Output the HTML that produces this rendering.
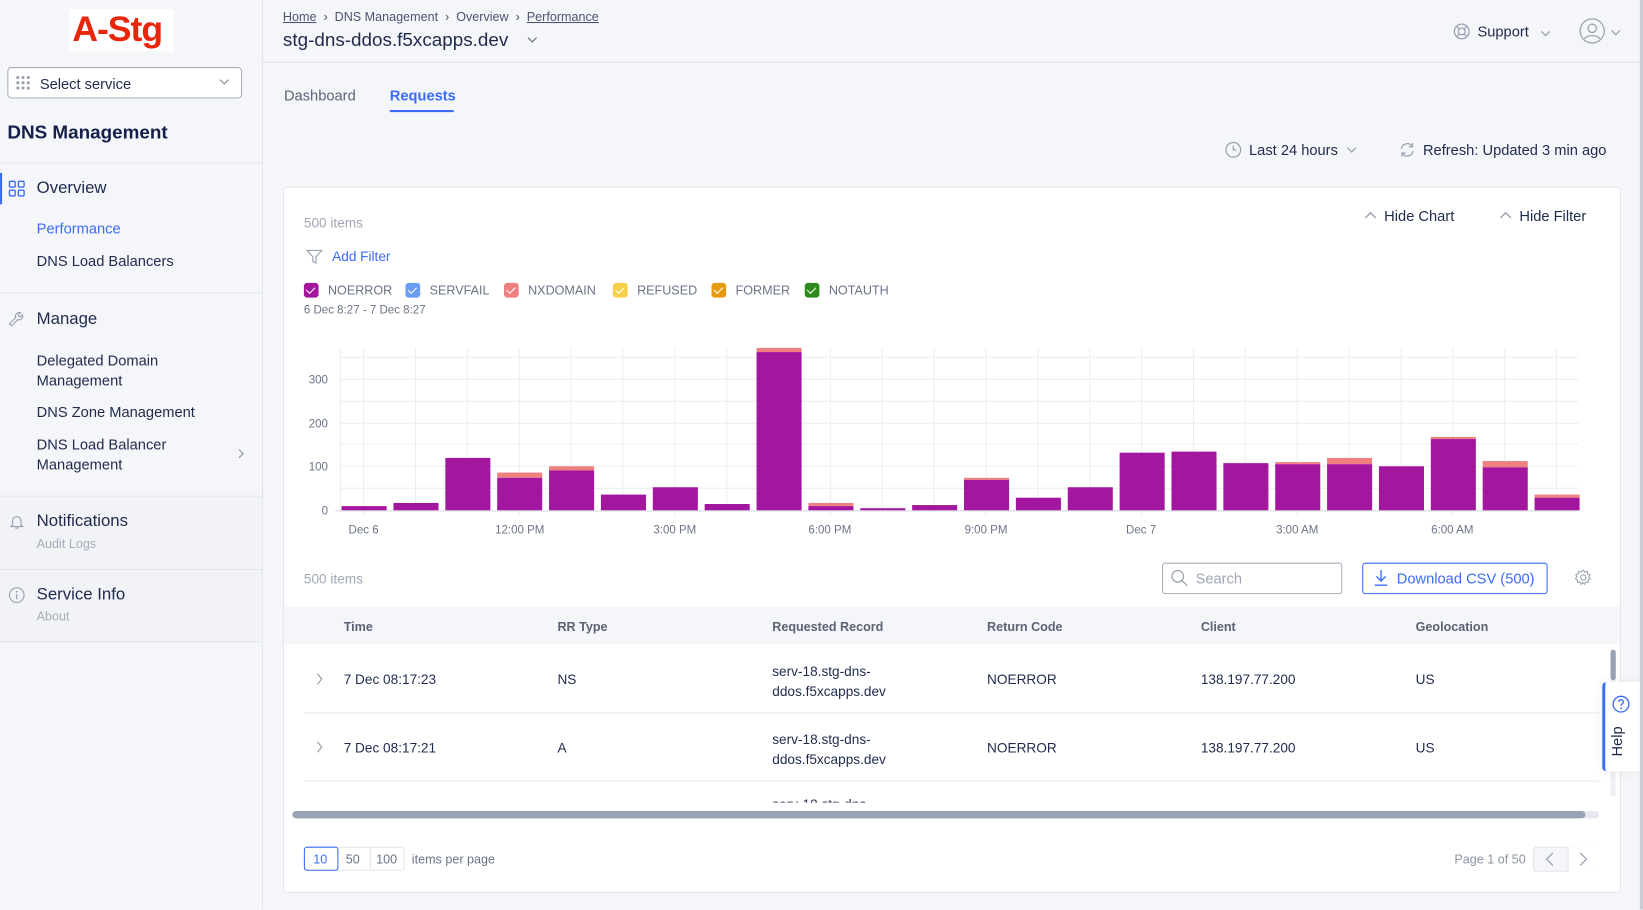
<!DOCTYPE html>
<html><head><meta charset="utf-8">
<style>
*{box-sizing:border-box;margin:0;padding:0}
html,body{width:1643px;height:910px;overflow:hidden;background:#f5f6f9;font-family:"Liberation Sans",sans-serif;color:#1f2a4d}
#w{position:absolute;left:0;top:0;width:1568px;height:868px;transform:scale(1.04783);transform-origin:0 0;background:#f5f6f9}
.a{position:absolute;white-space:nowrap}
.sb{position:absolute;left:0;top:0;width:251px;height:868px;background:#f5f6f9;border-right:1px solid #e2e5ec}
.hr{position:absolute;left:0;width:250px;height:1px;background:#e2e5ec}
.g{color:#8d93a3}
.b{color:#3b6cf6}
.t14{font-size:14px}
.t12{font-size:12px}
.cb{position:absolute;width:14px;height:14px;border-radius:3px;top:270px}
.cb:after{content:"";position:absolute;left:4px;top:2px;width:4px;height:7px;border:solid #fff;border-width:0 1.5px 1.5px 0;transform:rotate(45deg)}
.th{font-size:12px;font-weight:bold;color:#5b6275}
</style></head><body><div id="w">
<div class="sb">
 <div class="a" style="left:66px;top:9px;width:100px;height:40px;background:#fff"></div>
 <div class="a" style="left:69px;top:9px;font-size:34px;font-weight:bold;color:#e8260c;letter-spacing:-1px">A-Stg</div>
 <div class="a" style="left:7px;top:64px;width:224px;height:30px;border:1px solid #a7adbb;border-radius:4px;background:#fff"></div>
 <svg class="a" style="left:15px;top:72px" width="16" height="14"><g fill="#9aa1b1"><circle cx="2" cy="2" r="1.5"/><circle cx="7" cy="2" r="1.5"/><circle cx="12" cy="2" r="1.5"/><circle cx="2" cy="7" r="1.5"/><circle cx="7" cy="7" r="1.5"/><circle cx="12" cy="7" r="1.5"/><circle cx="2" cy="12" r="1.5"/><circle cx="7" cy="12" r="1.5"/><circle cx="12" cy="12" r="1.5"/></g></svg>
 <div class="a t14" style="left:38px;top:72px">Select service</div>
 <svg class="a" style="left:209px;top:75px" width="10" height="6"><path d="M1 1l4 4 4-4" fill="none" stroke="#8d93a3" stroke-width="1.2"/></svg>
 <div class="a" style="left:7px;top:116px;font-size:18px;font-weight:bold;color:#15204a">DNS Management</div>
 <div class="hr" style="top:155px"></div>
 <div class="a" style="left:0;top:165px;width:2px;height:30px;background:#3b6cf6"></div>
 <svg class="a" style="left:8px;top:172px" width="16" height="16"><g fill="none" stroke="#3b6cf6" stroke-width="1.3"><rect x="1" y="1" width="5.5" height="5.5" rx="1.2"/><rect x="9.5" y="1" width="5.5" height="5.5" rx="1.2"/><rect x="1" y="9.5" width="5.5" height="5.5" rx="1.2"/><rect x="9.5" y="9.5" width="5.5" height="5.5" rx="1.2"/></g></svg>
 <div class="a" style="left:35px;top:171px;font-size:16px">Overview</div>
 <div class="a t14 b" style="left:35px;top:210px">Performance</div>
 <div class="a t14" style="left:35px;top:241px">DNS Load Balancers</div>
 <div class="hr" style="top:279px"></div>
 <svg class="a" style="left:8px;top:297px" width="16" height="16"><path d="M3 14l6-6a3.5 3.5 0 0 0 4.5-4.5l-2 2-1.5-.5-.5-1.5 2-2A3.5 3.5 0 0 0 7 6L1 12z" fill="none" stroke="#9aa1b1" stroke-width="1.1"/></svg>
 <div class="a" style="left:35px;top:296px;font-size:16px">Manage</div>
 <div class="a t14" style="left:35px;top:335px;line-height:19px">Delegated Domain<br>Management</div>
 <div class="a t14" style="left:35px;top:385px">DNS Zone Management</div>
 <div class="a t14" style="left:35px;top:415px;line-height:19px">DNS Load Balancer<br>Management</div>
 <svg class="a" style="left:227px;top:428px" width="6" height="10"><path d="M1 1l4 4-4 4" fill="none" stroke="#8d93a3" stroke-width="1.1"/></svg>
 <div class="a" style="left:0;top:473px;width:250px;height:140px;background:#f1f3f7"></div>
 <div class="hr" style="top:473px"></div>
 <svg class="a" style="left:8px;top:490px" width="16" height="16"><path d="M4 11V7a4 4 0 0 1 8 0v4l1.5 1.5h-11zM6.5 14h3" fill="none" stroke="#9aa1b1" stroke-width="1.1"/></svg>
 <div class="a" style="left:35px;top:489px;font-size:16px">Notifications</div>
 <div class="a t12 g" style="left:35px;top:512px;color:#a5abb9">Audit Logs</div>
 <div class="hr" style="top:543px"></div>
 <svg class="a" style="left:8px;top:560px" width="16" height="16"><circle cx="8" cy="8" r="7" fill="none" stroke="#9aa1b1" stroke-width="1.1"/><path d="M8 7v5" stroke="#9aa1b1" stroke-width="1.2"/><circle cx="8" cy="4.7" r=".9" fill="#9aa1b1"/></svg>
 <div class="a" style="left:35px;top:559px;font-size:16px">Service Info</div>
 <div class="a t12" style="left:35px;top:581px;color:#a5abb9">About</div>
 <div class="hr" style="top:612px"></div>
</div>

<!-- header -->
<div class="a t12" style="left:270px;top:9px;color:#4b5470"><span style="text-decoration:underline">Home</span> &nbsp;›&nbsp; DNS Management &nbsp;›&nbsp; Overview &nbsp;›&nbsp; <span style="text-decoration:underline">Performance</span></div>
<div class="a" style="left:270px;top:28px;font-size:18px">stg-dns-ddos.f5xcapps.dev</div>
<svg class="a" style="left:503px;top:35px" width="10" height="6"><path d="M1 1l4 4 4-4" fill="none" stroke="#6b7387" stroke-width="1.2"/></svg>
<div class="a" style="left:251px;top:59px;width:1314px;height:1px;background:#e2e5ec"></div>
<svg class="a" style="left:1387px;top:22px" width="16" height="16"><g fill="none" stroke="#9aa1b1" stroke-width="1.2"><circle cx="8" cy="8" r="7"/><circle cx="8" cy="8" r="3.2"/><path d="M3 3l2.8 2.8M13 3l-2.8 2.8M3 13l2.8-2.8M13 13l-2.8-2.8"/></g></svg>
<div class="a t14" style="left:1410px;top:22px">Support</div>
<svg class="a" style="left:1470px;top:29px" width="10" height="6"><path d="M1 1l4 4 4-4" fill="none" stroke="#9aa1b1" stroke-width="1.2"/></svg>
<svg class="a" style="left:1507px;top:17px" width="25" height="25"><circle cx="12.5" cy="12.5" r="11.5" fill="none" stroke="#9aa1b1" stroke-width="1.2"/><circle cx="12.5" cy="10" r="4" fill="none" stroke="#9aa1b1" stroke-width="1.2"/><path d="M5 20c3-4 12-4 15 0" fill="none" stroke="#9aa1b1" stroke-width="1.2"/></svg>
<svg class="a" style="left:1537px;top:28px" width="10" height="6"><path d="M1 1l4 4 4-4" fill="none" stroke="#9aa1b1" stroke-width="1.2"/></svg>

<div class="a t14" style="left:271px;top:83px;color:#5b6275">Dashboard</div>
<div class="a t14 b" style="left:372px;top:83px;font-weight:bold">Requests</div>
<div class="a" style="left:372px;top:105px;width:61px;height:2px;background:#3b6cf6"></div>

<svg class="a" style="left:1169px;top:135px" width="16" height="16"><circle cx="8" cy="8" r="7" fill="none" stroke="#9aa1b1" stroke-width="1.2"/><path d="M8 4v4h3" fill="none" stroke="#9aa1b1" stroke-width="1.2"/></svg>
<div class="a t14" style="left:1192px;top:135px">Last 24 hours</div>
<svg class="a" style="left:1285px;top:140px" width="10" height="6"><path d="M1 1l4 4 4-4" fill="none" stroke="#9aa1b1" stroke-width="1.2"/></svg>
<svg class="a" style="left:1335px;top:135px" width="16" height="16"><g fill="none" stroke="#9aa1b1" stroke-width="1.2"><path d="M2.5 7A5.5 5.5 0 0 1 12.5 4.5M13.5 9a5.5 5.5 0 0 1-10 2.5"/><path d="M13 1.5v3.5h-3.5M3 14.5V11h3.5"/></g></svg>
<div class="a t14" style="left:1358px;top:135px">Refresh: Updated 3 min ago</div>

<!-- card -->
<div class="a" style="left:270px;top:178px;width:1277px;height:674px;background:#fff;border:1px solid #e3e6ee;border-radius:4px"></div>
<div class="a t14" style="left:290px;top:205px;color:#a0a6b4;font-size:13px">500 items</div>
<svg class="a" style="left:1302px;top:201px" width="12" height="8"><path d="M1 7l5-5 5 5" fill="none" stroke="#8d93a3" stroke-width="1.2"/></svg>
<div class="a t14" style="left:1321px;top:198px">Hide Chart</div>
<svg class="a" style="left:1431px;top:201px" width="12" height="8"><path d="M1 7l5-5 5 5" fill="none" stroke="#8d93a3" stroke-width="1.2"/></svg>
<div class="a t14" style="left:1450px;top:198px">Hide Filter</div>
<svg class="a" style="left:292px;top:237px" width="16" height="16"><path d="M1 2h14l-5.5 6v6l-3-1.5V8z" fill="none" stroke="#9aa1b1" stroke-width="1.1"/></svg>
<div class="a t14 b" style="left:317px;top:237px;font-size:13px">Add Filter</div>

<div class="cb" style="left:290px;background:#a3179f"></div><div class="a t12" style="left:313px;top:270px;color:#6b7387">NOERROR</div>
<div class="cb" style="left:387px;background:#6a9bf5"></div><div class="a t12" style="left:410px;top:270px;color:#6b7387">SERVFAIL</div>
<div class="cb" style="left:481px;background:#ee8080"></div><div class="a t12" style="left:504px;top:270px;color:#6b7387">NXDOMAIN</div>
<div class="cb" style="left:585px;background:#f6cf4b"></div><div class="a t12" style="left:608px;top:270px;color:#6b7387">REFUSED</div>
<div class="cb" style="left:679px;background:#e59a10"></div><div class="a t12" style="left:702px;top:270px;color:#6b7387">FORMER</div>
<div class="cb" style="left:768px;background:#2f8a1e"></div><div class="a t12" style="left:791px;top:270px;color:#6b7387">NOTAUTH</div>
<div class="a" style="left:290px;top:290px;font-size:11px;color:#6b7387">6 Dec 8:27 - 7 Dec 8:27</div>

<svg class="a" style="left:0;top:0" width="1568" height="868">
<g stroke="#eceef3" stroke-width="1">
<path d="M325 341H1506M325 362H1506M325 383H1506M325 404H1506M325 424H1506M325 445H1506M325 466H1506"/>
<path d="M325 332V487M347 332V492M396.5 332V487M446 332V487M495.5 332V492M545 332V487M594.5 332V487M644 332V492M693.5 332V487M743 332V487M792.5 332V492M842 332V487M891.5 332V487M941 332V492M990.5 332V487M1040 332V487M1089.5 332V492M1139 332V487M1188.5 332V487M1238 332V492M1287.5 332V487M1337 332V487M1386.5 332V492M1436 332V487M1485.5 332V487"/>
</g>
<path d="M320 487.5H1506" stroke="#e2e4ea" stroke-width="1.5"/>
<g font-size="11" fill="#6b7387" font-family="Liberation Sans,sans-serif" text-anchor="end">
<text x="313" y="366">300</text><text x="313" y="408">200</text><text x="313" y="449">100</text><text x="313" y="491">0</text></g>
<g font-size="11" fill="#6b7387" font-family="Liberation Sans,sans-serif" text-anchor="middle">
<text x="347" y="509">Dec 6</text><text x="496" y="509">12:00 PM</text><text x="644" y="509">3:00 PM</text><text x="792" y="509">6:00 PM</text><text x="941" y="509">9:00 PM</text><text x="1089" y="509">Dec 7</text><text x="1238" y="509">3:00 AM</text><text x="1386" y="509">6:00 AM</text></g>
<g fill="#ee8080">
<rect x="474.5" y="451" width="43" height="5"/><rect x="524" y="445" width="43" height="4"/><rect x="722" y="332" width="43" height="4"/><rect x="771.5" y="480" width="43" height="3"/><rect x="920" y="456" width="43" height="2"/><rect x="1217" y="441" width="43" height="2"/><rect x="1266.5" y="437" width="43" height="6"/><rect x="1365.5" y="417" width="43" height="2"/><rect x="1415" y="440" width="43" height="6"/><rect x="1464.5" y="472" width="43" height="3"/>
</g>
<g fill="#a3179f">
<rect x="326" y="483" width="43" height="4"/><rect x="375.5" y="480" width="43" height="7"/><rect x="425" y="437" width="43" height="50"/><rect x="474.5" y="456" width="43" height="31"/><rect x="524" y="449" width="43" height="38"/><rect x="573.5" y="472" width="43" height="15"/><rect x="623" y="465" width="43" height="22"/><rect x="672.5" y="481" width="43" height="6"/><rect x="722" y="336" width="43" height="151"/><rect x="771.5" y="483" width="43" height="4"/><rect x="821" y="485" width="43" height="2"/><rect x="870.5" y="482" width="43" height="5"/><rect x="920" y="458" width="43" height="29"/><rect x="969.5" y="475" width="43" height="12"/><rect x="1019" y="465" width="43" height="22"/><rect x="1068.5" y="432" width="43" height="55"/><rect x="1118" y="431" width="43" height="56"/><rect x="1167.5" y="442" width="43" height="45"/><rect x="1217" y="443" width="43" height="44"/><rect x="1266.5" y="443" width="43" height="44"/><rect x="1316" y="445" width="43" height="42"/><rect x="1365.5" y="419" width="43" height="68"/><rect x="1415" y="446" width="43" height="41"/><rect x="1464.5" y="475" width="43" height="12"/>
</g>
</svg>

<div class="a" style="left:290px;top:545px;font-size:13px;color:#a0a6b4">500 items</div>
<div class="a" style="left:1109px;top:537px;width:172px;height:30px;border:1px solid #a7adbb;border-radius:3px"></div>
<svg class="a" style="left:1117px;top:543px" width="17" height="17"><circle cx="7" cy="7" r="5.5" fill="none" stroke="#9aa1b1" stroke-width="1.2"/><path d="M11 11l5 5" stroke="#9aa1b1" stroke-width="1.2"/></svg>
<div class="a t14" style="left:1141px;top:544px;color:#a0a6b4">Search</div>
<div class="a" style="left:1300px;top:537px;width:177px;height:30px;border:1px solid #3b6cf6;border-radius:3px"></div>
<svg class="a" style="left:1310px;top:543px" width="16" height="17"><path d="M8 1v10M3.5 7L8 11.5 12.5 7M2 15.5h12" fill="none" stroke="#3b6cf6" stroke-width="1.3"/></svg>
<div class="a t14 b" style="left:1333px;top:544px">Download CSV (500)</div>
<svg class="a" style="left:1503px;top:543px" width="16" height="16"><circle cx="8" cy="8" r="2.5" fill="none" stroke="#9aa1b1" stroke-width="1.1"/><path d="M8 1l1.4 2 2.3-.8.3 2.4 2.3.7-1 2.2 1.5 1.9-2.2 1 .1 2.4-2.4-.3-1 2.2-1.7-1.7-1.7 1.7-1-2.2-2.4.3.1-2.4-2.2-1 1.5-1.9-1-2.2 2.3-.7.3-2.4 2.3.8z" fill="none" stroke="#9aa1b1" stroke-width="1"/></svg>

<div class="a" style="left:271px;top:579px;width:1275px;height:36px;background:#f5f6f9"></div>
<div class="a th" style="left:328px;top:591px">Time</div>
<div class="a th" style="left:532px;top:591px">RR Type</div>
<div class="a th" style="left:737px;top:591px">Requested Record</div>
<div class="a th" style="left:942px;top:591px">Return Code</div>
<div class="a th" style="left:1146px;top:591px">Client</div>
<div class="a th" style="left:1351px;top:591px">Geolocation</div>

<div class="a" style="left:271px;top:615px;width:1260px;height:151px;overflow:hidden">
 <div style="position:absolute;left:0;top:0;width:1260px;font-size:13px">
  <svg class="a" style="left:31px;top:27px" width="6" height="12"><path d="M1 1l4 5-4 5" fill="none" stroke="#8d93a3" stroke-width="1"/></svg>
  <div class="a" style="left:57px;top:26px">7 Dec 08:17:23</div>
  <div class="a" style="left:261px;top:26px">NS</div>
  <div class="a" style="left:466px;top:16px;line-height:19px">serv-18.stg-dns-<br>ddos.f5xcapps.dev</div>
  <div class="a" style="left:671px;top:26px">NOERROR</div>
  <div class="a" style="left:875px;top:26px">138.197.77.200</div>
  <div class="a" style="left:1080px;top:26px">US</div>
  <div class="a" style="left:19px;top:65px;width:1236px;height:1px;background:#e3e6ee"></div>
  <svg class="a" style="left:31px;top:92px" width="6" height="12"><path d="M1 1l4 5-4 5" fill="none" stroke="#8d93a3" stroke-width="1"/></svg>
  <div class="a" style="left:57px;top:91px">7 Dec 08:17:21</div>
  <div class="a" style="left:261px;top:91px">A</div>
  <div class="a" style="left:466px;top:81px;line-height:19px">serv-18.stg-dns-<br>ddos.f5xcapps.dev</div>
  <div class="a" style="left:671px;top:91px">NOERROR</div>
  <div class="a" style="left:875px;top:91px">138.197.77.200</div>
  <div class="a" style="left:1080px;top:91px">US</div>
  <div class="a" style="left:19px;top:130px;width:1236px;height:1px;background:#e3e6ee"></div>
  <div class="a" style="left:466px;top:145px">serv-18.stg-dns-</div>
 </div>
</div>
<div class="a" style="left:1537px;top:620px;width:5px;height:140px;background:#eef0f4;border-radius:3px"></div>
<div class="a" style="left:1537px;top:620px;width:5px;height:29px;background:#9aa3b3;border-radius:3px"></div>
<div class="a" style="left:279px;top:774px;width:1247px;height:7px;background:#e6e9f0;border-radius:4px"></div>
<div class="a" style="left:279px;top:774px;width:1234px;height:7px;background:#9aa3b3;border-radius:4px"></div>

<div class="a" style="left:290px;top:808px;width:96px;height:23px;border:1px solid #e3e6ee;border-radius:3px"></div>
<div class="a" style="left:353px;top:808px;width:1px;height:23px;background:#e3e6ee"></div>
<div class="a" style="left:290px;top:808px;width:33px;height:23px;border:1px solid #3b6cf6;border-radius:3px"></div>
<div class="a t12 b" style="left:299px;top:813px">10</div>
<div class="a t12" style="left:330px;top:813px;color:#6b7387">50</div>
<div class="a t12" style="left:359px;top:813px;color:#6b7387">100</div>
<div class="a t12" style="left:393px;top:813px;color:#6b7387">items per page</div>
<div class="a t12" style="left:1388px;top:813px;color:#8d93a3">Page 1 of 50</div>
<div class="a" style="left:1463px;top:808px;width:64px;height:24px;border:1px solid #e3e6ee;border-radius:3px;background:#f5f6f9"></div>
<div class="a" style="left:1496px;top:808px;width:31px;height:24px;border-left:1px solid #e3e6ee;background:#fff"></div>
<svg class="a" style="left:1475px;top:813px" width="8" height="14"><path d="M7 1L1 7l6 6" fill="none" stroke="#9aa1b1" stroke-width="1.2"/></svg>
<svg class="a" style="left:1507px;top:813px" width="8" height="14"><path d="M1 1l6 6-6 6" fill="none" stroke="#9aa1b1" stroke-width="1.2"/></svg>

<div class="a" style="left:1529px;top:651px;width:39px;height:85px;background:#fff;border-left:3px solid #3b6cf6;border-radius:4px 0 0 4px;box-shadow:0 0 12px rgba(0,0,0,.06)"></div>
<svg class="a" style="left:1538px;top:663px" width="18" height="18"><circle cx="9" cy="9" r="7.5" fill="none" stroke="#3b6cf6" stroke-width="1.3"/><path d="M6.8 7a2.2 2.2 0 1 1 3 2c-.6.3-.8.7-.8 1.5" fill="none" stroke="#3b6cf6" stroke-width="1.3"/><circle cx="9" cy="13" r=".9" fill="#3b6cf6"/></svg>
<div class="a t14" style="left:1535px;top:722px;transform:rotate(-90deg);transform-origin:0 0;color:#1f2a4d">Help</div>
<div class="a" style="left:1565px;top:0;width:3px;height:868px;background:#c9ccd3"></div>
</div></body></html>
